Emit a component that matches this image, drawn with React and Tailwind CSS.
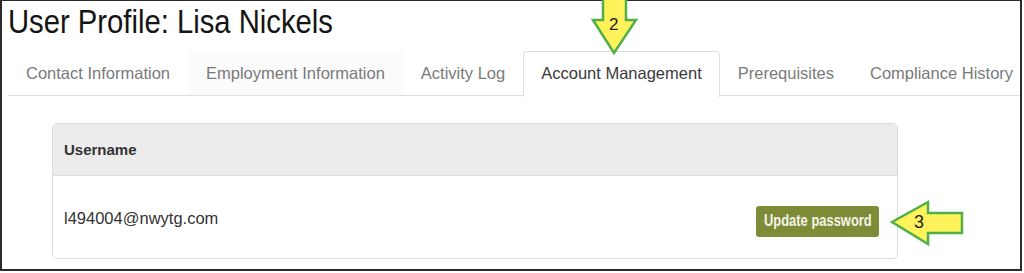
import React from 'react'

const tabs = [
  { label: 'Contact Information' },
  { label: 'Employment Information', hover: true },
  { label: 'Activity Log' },
  { label: 'Account Management', active: true },
  { label: 'Prerequisites' },
  { label: 'Compliance History' },
]

function App() {
  return (
    <div className="relative w-[1024px] h-[273px] bg-white overflow-hidden">
      <div className="w-[1022px] h-[271px] border-x-2 border-b-2 border-t border-[#2b2b2b] bg-white overflow-hidden">
        {/* Title */}
        <h1 className="pl-[6px] pt-[1px] h-[38px] text-[34px] leading-[38px] text-[#141414] whitespace-nowrap font-['Liberation_Sans',Arial,sans-serif]">
          <span className="inline-block origin-left scale-x-[0.86]">User Profile: Lisa Nickels</span>
        </h1>

        {/* Tabs */}
        <div className="ml-[6px] mt-[12px] flex h-[45px] border-b border-[#dedede] font-['Liberation_Sans',Arial,sans-serif]">
          {tabs.map((t) => (
            <div
              key={t.label}
              className={
                t.active
                  ? 'shrink-0 whitespace-nowrap flex items-center px-[17px] pb-[2px] h-[46px] -mb-px rounded-t-[4px] border border-b-0 border-[#dedede] bg-white text-[16.5px] text-[#3a3a3a]'
                  : t.hover
                  ? 'shrink-0 whitespace-nowrap flex items-center px-[18px] bg-[#fbfbfb] text-[16.5px] text-[#7a7a7a]'
                  : 'shrink-0 whitespace-nowrap flex items-center px-[18px] text-[16.5px] text-[#7a7a7a]'
              }
            >
              {t.label}
            </div>
          ))}
        </div>

        {/* Card */}
        <div className="ml-[50px] mt-[27px] w-[846px] rounded-[5px] border border-[#dcdcdc] overflow-hidden font-['Liberation_Sans',Arial,sans-serif]">
          <div className="h-[52px] bg-[#ececec] border-b border-[#dcdcdc] flex items-center px-[11px] pt-[2px] text-[15px] font-bold text-[#333]">
            Username
          </div>
          <div className="h-[82px] flex items-center justify-between pl-[11px] pr-[18px]">
            <span className="text-[16.5px] text-[#333] mt-[2px]">l494004@nwytg.com</span>
            <button className="mt-[8px] h-[31px] w-[123px] rounded-[3px] bg-[#7e8b37] text-[#f4f4ea] text-[17px] font-bold whitespace-nowrap flex items-center justify-center">
              <span className="inline-block whitespace-nowrap scale-x-[0.76]">Update password</span>
            </button>
          </div>
        </div>
      </div>

      {/* Annotation arrows */}
      <svg className="absolute left-0 top-0 pointer-events-none" width="1024" height="273">
        <polygon
          points="603,-3 626,-3 626,20 636,20 614,53 593,20 603,20"
          fill="#fff25a"
          stroke="#4fb04a"
          strokeWidth="2.5"
          strokeLinejoin="miter"
        />
        <polygon
          points="892,222 928,202 928,213 962,213 962,233 928,233 928,244"
          fill="#fff25a"
          stroke="#4fb04a"
          strokeWidth="2.5"
          strokeLinejoin="miter"
        />
      </svg>
      <div className="absolute left-[609px] top-[15px] text-[17px] leading-[20px] text-[#222] font-['Liberation_Sans',Arial,sans-serif]">
        2
      </div>
      <div className="absolute left-[914px] top-[211px] text-[18px] leading-[22px] text-[#222] font-['Liberation_Sans',Arial,sans-serif]">
        3
      </div>
    </div>
  )
}

export default App
